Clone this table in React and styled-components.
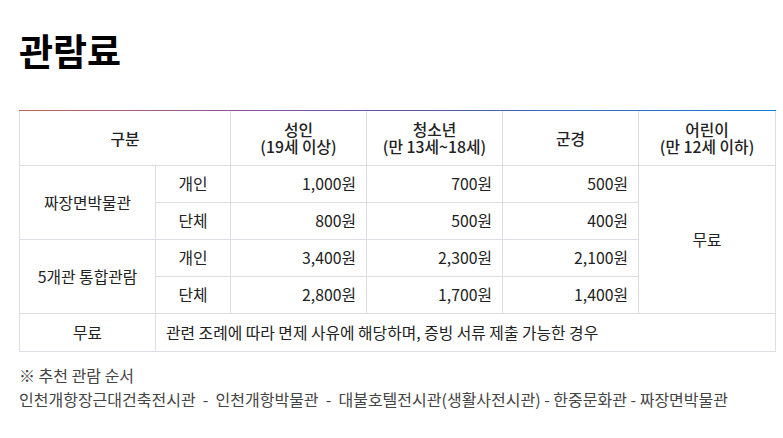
import styled, { createGlobalStyle } from "styled-components";

const GlobalStyle = createGlobalStyle`
  body {
    margin: 0;
    background: #fff;
    font-family: "Noto Sans CJK KR", "Noto Sans", sans-serif;
    color: #222;
  }
`;

const rows = [
  { group: "짜장면박물관", type: "개인", prices: ["1,000원", "700원", "500원"] },
  { group: null, type: "단체", prices: ["800원", "500원", "400원"] },
  { group: "5개관 통합관람", type: "개인", prices: ["3,400원", "2,300원", "2,100원"] },
  { group: null, type: "단체", prices: ["2,800원", "1,700원", "1,400원"] },
];

const App = () => {
  return (
    <>
      <GlobalStyle />
      <Page>
        <Title>관람료</Title>
        <TopLine />
        <Table>
          <colgroup>
            <col style={{ width: 136 }} />
            <col style={{ width: 75 }} />
            <col style={{ width: 136 }} />
            <col style={{ width: 136 }} />
            <col style={{ width: 136 }} />
            <col style={{ width: 137 }} />
          </colgroup>
          <thead>
            <tr>
              <Th colSpan={2}>구분</Th>
              <Th><Line>성인</Line><Line>(19세 이상)</Line></Th>
              <Th><Line>청소년</Line><Line>(만 13세~18세)</Line></Th>
              <Th>군경</Th>
              <Th><Line>어린이</Line><Line>(만 12세 이하)</Line></Th>
            </tr>
          </thead>
          <tbody>
            {rows.map((r, i) => (
              <tr key={i}>
                {r.group && <Cell rowSpan={2}>{r.group}</Cell>}
                <Cell>{r.type}</Cell>
                {r.prices.map((p, j) => (
                  <Cell key={j} $right>{p}</Cell>
                ))}
                {i === 0 && <Cell rowSpan={4}>무료</Cell>}
              </tr>
            ))}
            <tr>
              <Cell $tall>무료</Cell>
              <Cell $tall colSpan={5} $left>관련 조례에 따라 면제 사유에 해당하며, 증빙 서류 제출 가능한 경우</Cell>
            </tr>
          </tbody>
        </Table>
        <Note>
          <p>※ 추천 관람 순서</p>
          <p>인천개항장근대건축전시관&nbsp; - &nbsp;인천개항박물관&nbsp; - &nbsp;대불호텔전시관(생활사전시관) - 한중문화관 - 짜장면박물관</p>
        </Note>
      </Page>
    </>
  );
};

export default App;

const Page = styled.div`
  padding: 22px 8px 0 19px;
  width: 757px;
`;

const Title = styled.h2`
  margin: 0 0 32px;
  font-size: 37px;
  font-weight: 700;
  line-height: 56px;
  color: #000;
`;

const TopLine = styled.div`
  height: 1px;
  background: linear-gradient(to right, #c2645a 0%, #6a4fb8 45%, #0a80d4 100%);
`;

const Table = styled.table`
  width: 757px;
  border-collapse: collapse;
  table-layout: fixed;
  font-size: 15.8px;
`;

const Th = styled.th`
  height: 54px;
  padding: 0 4px;
  border: 1px solid #dddde5;
  border-top: none;
  font-weight: 500;
  line-height: 17px;
  color: #222;
  text-align: center;
  vertical-align: middle;
`;

const Line = styled.span`
  display: block;
  height: 17px;
  overflow: visible;
`;

const Cell = styled.td`
  height: ${(p) => (p.$tall ? "37px" : "36px")};
  padding: 0 10px;
  border: 1px solid #dddde5;
  color: #222;
  line-height: 20px;
  text-align: ${(p) => (p.$right ? "right" : p.$left ? "left" : "center")};
  vertical-align: middle;
`;

const Note = styled.div`
  margin-top: 11px;
  font-size: 16px;
  color: #444;
  p {
    margin: 0;
    line-height: 24px;
  }
`;
